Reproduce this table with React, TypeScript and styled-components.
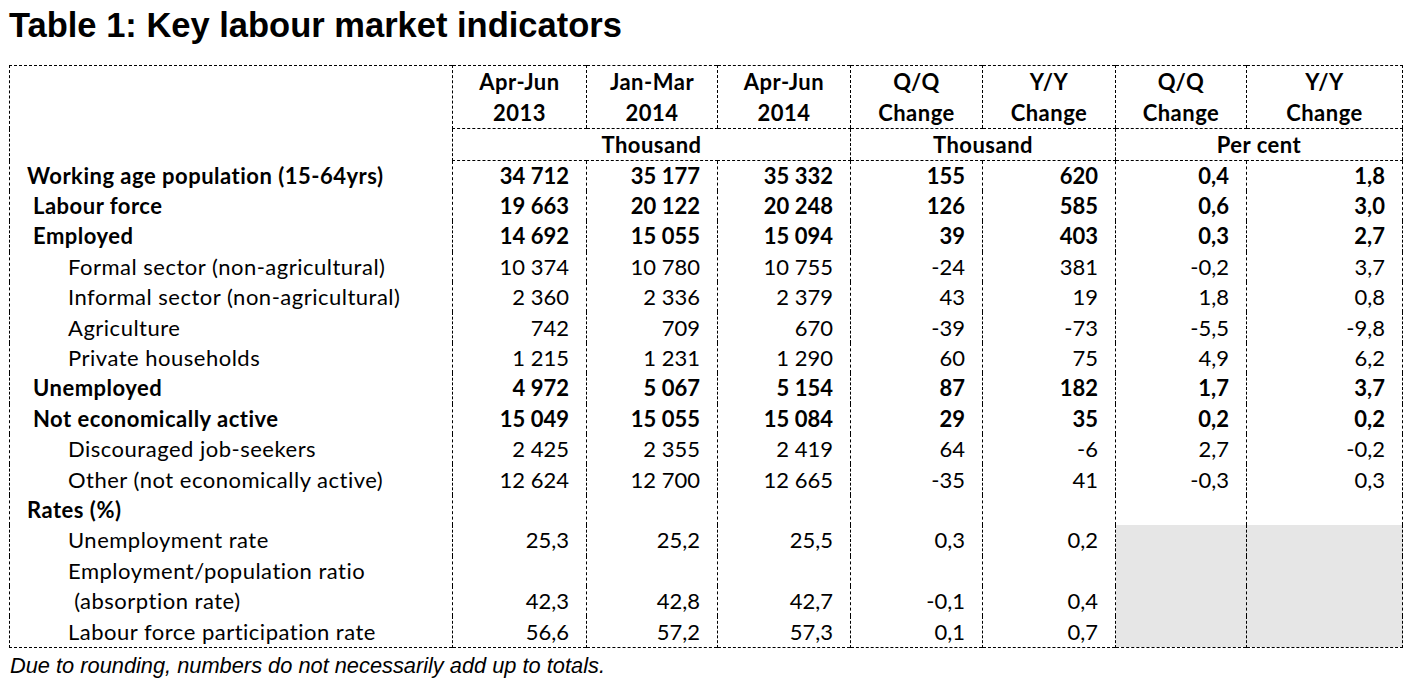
import * as React from 'react';
import styled, { createGlobalStyle } from 'styled-components';

const GlobalStyle = createGlobalStyle`
  html, body {
    margin: 0;
    padding: 0;
    background: #ffffff;
  }
  body {
    font-family: Lato, "Open Sans", sans-serif;
    color: #000000;
  }
`;

const Page = styled.div`
  width: 1413px;
  height: 682px;
  padding-left: 9px;
  box-sizing: border-box;
  overflow: hidden;
`;

const Title = styled.h1`
  margin: 0;
  height: 65px;
  padding-top: 5px;
  box-sizing: border-box;
  font-family: "Liberation Sans", Arial, sans-serif;
  font-weight: 700;
  font-size: 34.5px;
  line-height: 40px;
  white-space: nowrap;
`;

const DASH = '1px dashed #000';

const Table = styled.table`
  border-collapse: collapse;
  table-layout: fixed;
  width: 1393px;
  border: ${DASH};
  font-size: 22px;
`;

const HeadCell = styled.th<{ $bottom?: boolean; $tall?: boolean }>`
  padding: 0;
  font-weight: 700;
  text-align: center;
  letter-spacing: 0.5px;
  line-height: 31px;
  height: ${p => (p.$tall ? '60px' : '31px')};
  border-left: ${DASH};
  border-bottom: ${p => (p.$bottom ? DASH : 'none')};
`;

const BlankHead = styled.th`
  padding: 0;
  border: none;
`;

const LabelCell = styled.td<{ $indent: number; $bold?: boolean }>`
  padding: 0 0 0 ${p => p.$indent}px;
  height: 30.4px;
  line-height: 28px;
  text-align: left;
  white-space: pre;
  letter-spacing: 0.5px;
  font-weight: ${p => (p.$bold ? 700 : 400)};
`;

const NumCell = styled.td<{ $bold?: boolean; $shaded?: boolean }>`
  padding: 0 17px 0 0;
  line-height: 28px;
  text-align: right;
  border-left: ${DASH};
  font-weight: ${p => (p.$bold ? 700 : 400)};
  background: ${p => (p.$shaded ? '#e6e6e6' : 'transparent')};
`;

const Note = styled.p`
  margin: 6px 0 0 1px;
  font-family: "Liberation Sans", Arial, sans-serif;
  font-style: italic;
  font-size: 21.8px;
  line-height: 24px;
  white-space: nowrap;
`;

interface Row {
  label: string;
  indent: number;
  bold?: boolean;
  values: string[];
  shaded?: boolean;
}

const INDENT = [17, 23, 58];

const rows: Row[] = [
  { label: 'Working age population (15-64yrs)', indent: 0, bold: true, values: ['34 712', '35 177', '35 332', '155', '620', '0,4', '1,8'] },
  { label: 'Labour force', indent: 1, bold: true, values: ['19 663', '20 122', '20 248', '126', '585', '0,6', '3,0'] },
  { label: 'Employed', indent: 1, bold: true, values: ['14 692', '15 055', '15 094', '39', '403', '0,3', '2,7'] },
  { label: 'Formal sector (non-agricultural)', indent: 2, values: ['10 374', '10 780', '10 755', '-24', '381', '-0,2', '3,7'] },
  { label: 'Informal sector (non-agricultural)', indent: 2, values: ['2 360', '2 336', '2 379', '43', '19', '1,8', '0,8'] },
  { label: 'Agriculture', indent: 2, values: ['742', '709', '670', '-39', '-73', '-5,5', '-9,8'] },
  { label: 'Private households', indent: 2, values: ['1 215', '1 231', '1 290', '60', '75', '4,9', '6,2'] },
  { label: 'Unemployed', indent: 1, bold: true, values: ['4 972', '5 067', '5 154', '87', '182', '1,7', '3,7'] },
  { label: 'Not economically active', indent: 1, bold: true, values: ['15 049', '15 055', '15 084', '29', '35', '0,2', '0,2'] },
  { label: 'Discouraged job-seekers', indent: 2, values: ['2 425', '2 355', '2 419', '64', '-6', '2,7', '-0,2'] },
  { label: 'Other (not economically active)', indent: 2, values: ['12 624', '12 700', '12 665', '-35', '41', '-0,3', '0,3'] },
  { label: 'Rates (%)', indent: 0, bold: true, values: [] },
  { label: 'Unemployment rate', indent: 2, values: ['25,3', '25,2', '25,5', '0,3', '0,2'], shaded: true },
  { label: 'Employment/population ratio', indent: 2, values: [], shaded: true },
  { label: ' (absorption rate)', indent: 2, values: ['42,3', '42,8', '42,7', '-0,1', '0,4'], shaded: true },
  { label: 'Labour force participation rate', indent: 2, values: ['56,6', '57,2', '57,3', '0,1', '0,7'], shaded: true },
];

const widths = [443, 134, 131, 133, 132, 133, 131, 156];

const periods = [
  ['Apr-Jun', '2013'],
  ['Jan-Mar', '2014'],
  ['Apr-Jun', '2014'],
  ['Q/Q', 'Change'],
  ['Y/Y', 'Change'],
  ['Q/Q', 'Change'],
  ['Y/Y', 'Change'],
];

export default function App() {
  return (
    <Page>
      <GlobalStyle />
      <Title>Table 1: Key labour market indicators</Title>
      <Table>
        <colgroup>
          {widths.map((w, i) => (
            <col key={i} style={{ width: w }} />
          ))}
        </colgroup>
        <thead>
          <tr>
            <BlankHead rowSpan={2} />
            {periods.map((p, i) => (
              <HeadCell key={i} $tall $bottom>
                {p[0]}
                <br />
                {p[1]}
              </HeadCell>
            ))}
          </tr>
          <tr>
            <HeadCell colSpan={3} $bottom>Thousand</HeadCell>
            <HeadCell colSpan={2} $bottom>Thousand</HeadCell>
            <HeadCell colSpan={2} $bottom>Per cent</HeadCell>
          </tr>
        </thead>
        <tbody>
          {rows.map((r, i) => (
            <tr key={i}>
              <LabelCell $indent={INDENT[r.indent]} $bold={r.bold}>
                {r.label}
              </LabelCell>
              {Array.from({ length: 7 }).map((_, j) => (
                <NumCell key={j} $bold={r.bold} $shaded={r.shaded && j >= 5}>
                  {r.values[j] ?? ''}
                </NumCell>
              ))}
            </tr>
          ))}
        </tbody>
      </Table>
      <Note>Due to rounding, numbers do not necessarily add up to totals.</Note>
    </Page>
  );
}
